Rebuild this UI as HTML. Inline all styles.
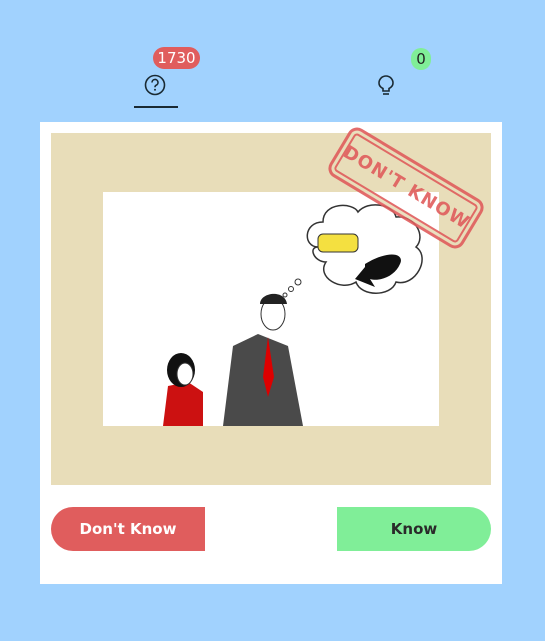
<!DOCTYPE html>
<html><head><style>
body{margin:0;width:545px;height:641px;background:#a1d2fe;font-family:"DejaVu Sans","Liberation Sans",sans-serif;position:relative;overflow:hidden}
.badge{position:absolute;color:#fff;font-size:15px;text-align:center;line-height:22px;border-radius:11px}
.card{position:absolute;left:40px;top:122px;width:462px;height:462px;background:#fff}
.beige{position:absolute;left:11px;top:11px;width:440px;height:352px;background:#e8ddb9;overflow:hidden}
.pic{position:absolute;left:52px;top:59px;width:336px;height:234px;background:#fff;overflow:hidden}
.btn{position:absolute;top:385px;height:44px;line-height:44px;text-align:center;font-size:15px;font-weight:bold;width:154px}
.stamp{position:absolute;left:328px;top:160px;width:150px;height:50px;border:3px solid #e05d5d;border-radius:10px;transform:rotate(31deg);color:#e05d5d;font-weight:bold;font-size:18px;text-align:center;line-height:50px;letter-spacing:1px;box-shadow:inset 0 0 0 3px #e8ddb9,inset 0 0 0 5px #e05d5d;opacity:.9;font-family:"DejaVu Sans",sans-serif}
</style></head><body>
<div class="badge" style="left:153px;top:47px;width:47px;background:#e05d5d">1730</div>
<div class="badge" style="left:411px;top:48px;width:20px;background:#80ee98;color:#222">0</div>
<svg style="position:absolute;left:144px;top:74px" width="22" height="22" viewBox="0 0 22 22"><circle cx="11" cy="11" r="9.5" fill="none" stroke="#1a2a33" stroke-width="1.6"/><path d="M8 8.5a3 3 0 1 1 4 2.8c-.8.4-1 1-1 2" fill="none" stroke="#1a2a33" stroke-width="1.6"/><circle cx="11" cy="15.8" r="1" fill="#1a2a33"/></svg>
<div style="position:absolute;left:134px;top:106px;width:44px;height:2px;background:#1a2a33"></div>
<svg style="position:absolute;left:376px;top:74px" width="20" height="24" viewBox="0 0 20 24"><path d="M7 17v-2.5C4 13 3 11 3 9a7 7 0 0 1 14 0c0 2-1 4-4 5.5V17z" fill="none" stroke="#1a2a33" stroke-width="1.6"/><path d="M7 20h6" stroke="#1a2a33" stroke-width="1.6"/></svg>
<div class="card">
<div class="beige"><div class="pic">
<svg width="336" height="234" viewBox="0 0 336 234">
<path d="M215 55c-15 0-15-25 5-25c0-20 30-20 35-10c10-12 35-8 38 5c20-2 30 20 20 30c15 10 0 40-20 35c-5 15-35 15-40 0c-15 10-40-5-30-20c-12 0-18-15-8-15z" fill="#fff" stroke="#333" stroke-width="1.5"/>
<rect x="215" y="42" width="40" height="18" rx="5" fill="#f4e040" stroke="#333"/>
<path d="M262 72c25-15 40-10 35 0c-5 12-20 18-30 15l5 8-20-8 10-12z" fill="#111"/>
<circle cx="195" cy="90" r="3" fill="none" stroke="#333"/><circle cx="188" cy="97" r="2.5" fill="none" stroke="#333"/><circle cx="182" cy="103" r="2" fill="none" stroke="#333"/>
<path d="M120 234l10-80 25-12 30 12 15 80z" fill="#4a4a4a"/>
<path d="M165 145l6 40-6 20-5-20z" fill="#d00"/>
<ellipse cx="170" cy="122" rx="12" ry="16" fill="#fff" stroke="#333"/>
<path d="M157 112c0-12 25-15 27 0" fill="#222"/>
<path d="M60 234l5-40 20-4 15 10v34z" fill="#c11"/>
<ellipse cx="78" cy="178" rx="14" ry="17" fill="#111"/>
<ellipse cx="82" cy="182" rx="8" ry="11" fill="#fff" stroke="#333"/>
</svg>
</div></div>
<div class="btn" style="left:11px;background:#e05d5d;color:#fff;border-radius:22px 0 0 22px">Don't Know</div>
<div class="btn" style="left:297px;background:#80ee98;color:#2a2a2a;border-radius:0 22px 22px 0">Know</div>
</div>
<div class="stamp">DON'T KNOW</div>
</body></html>
